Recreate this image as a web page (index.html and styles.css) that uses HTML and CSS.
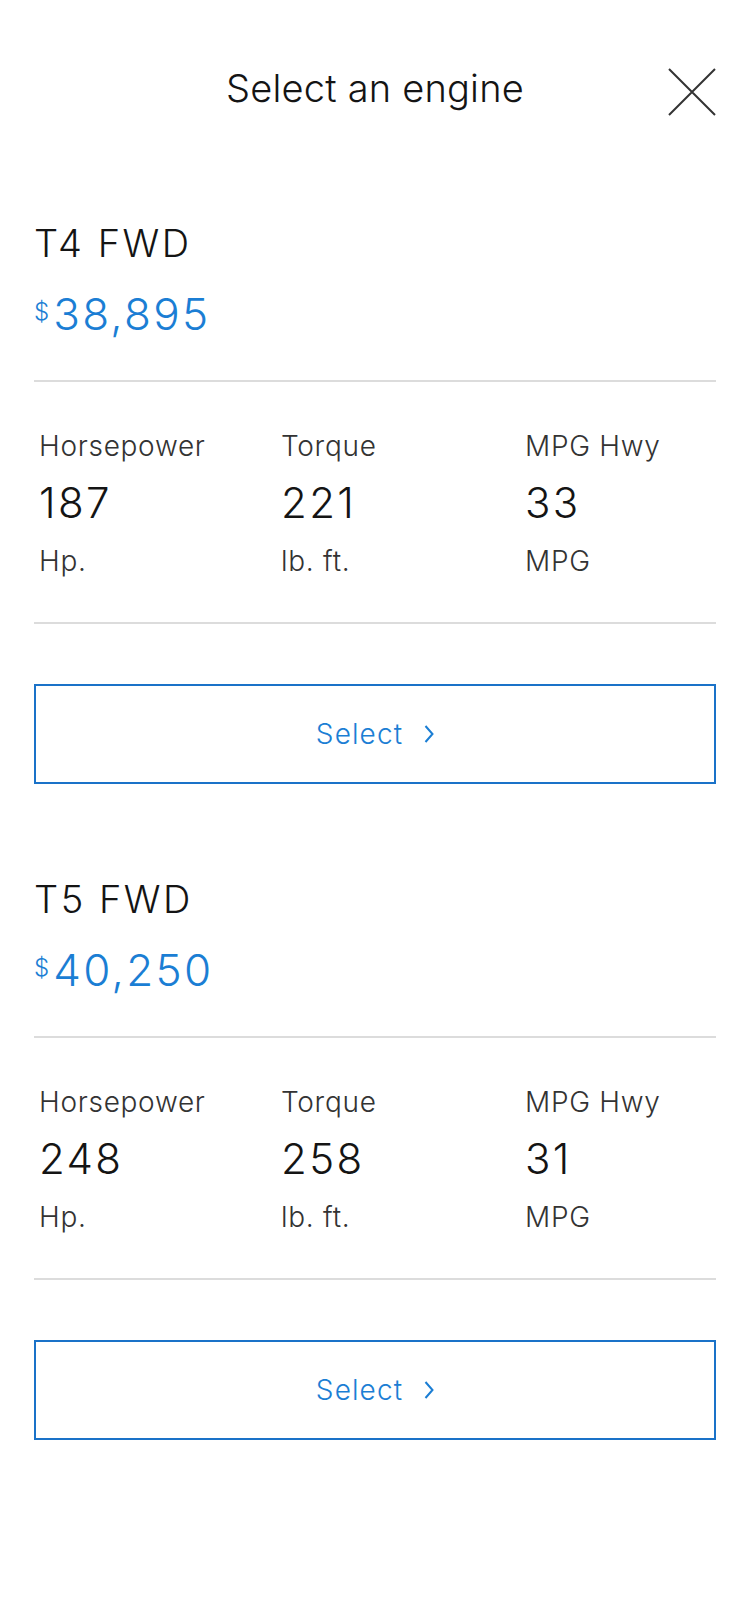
FILE: index.html
```html
<!DOCTYPE html>
<html lang="en">
<head>
<meta charset="utf-8">
<title>Select an engine</title>
<link rel="stylesheet" href="styles.css">
</head>
<body>
<div class="page">
  <header class="header">
    <h1 class="title">Select an engine</h1>
    <button class="close" aria-label="Close">
      <svg width="48" height="48" viewBox="0 0 48 48"><path d="M1 1 L47 47 M47 1 L1 47" stroke="#333" stroke-width="2" fill="none"/></svg>
    </button>
  </header>

  <section class="engine">
    <h2 class="name">T4 FWD</h2>
    <div class="price"><span class="cur">$</span>38,895</div>
    <hr class="divider">
    <div class="stats">
      <div class="stat"><div class="label">Horsepower</div><div class="value">187</div><div class="unit">Hp.</div></div>
      <div class="stat"><div class="label">Torque</div><div class="value">221</div><div class="unit">lb. ft.</div></div>
      <div class="stat"><div class="label">MPG Hwy</div><div class="value">33</div><div class="unit">MPG</div></div>
    </div>
    <hr class="divider">
    <button class="select">Select <span class="chev"><svg width="10" height="18" viewBox="0 0 10 18"><path d="M1.5 1 L8.5 9 L1.5 17" stroke="#1b7ed4" stroke-width="2" fill="none"/></svg></span></button>
  </section>

  <section class="engine">
    <h2 class="name">T5 FWD</h2>
    <div class="price"><span class="cur">$</span>40,250</div>
    <hr class="divider">
    <div class="stats">
      <div class="stat"><div class="label">Horsepower</div><div class="value">248</div><div class="unit">Hp.</div></div>
      <div class="stat"><div class="label">Torque</div><div class="value">258</div><div class="unit">lb. ft.</div></div>
      <div class="stat"><div class="label">MPG Hwy</div><div class="value">31</div><div class="unit">MPG</div></div>
    </div>
    <hr class="divider">
    <button class="select">Select <span class="chev"><svg width="10" height="18" viewBox="0 0 10 18"><path d="M1.5 1 L8.5 9 L1.5 17" stroke="#1b7ed4" stroke-width="2" fill="none"/></svg></span></button>
  </section>
</div>
</body>
</html>
```

FILE: styles.css
```css
* { box-sizing: border-box; }
html, body { margin: 0; padding: 0; background: #fff; }
body {
  font-family: Inter, "Noto Sans", "Liberation Sans", sans-serif;
  font-weight: 300;
  color: #141414;
}
.page { width: 750px; }

.header {
  position: relative;
  height: 176px;
  display: flex;
  align-items: center;
  justify-content: center;
}
.title {
  margin: 0;
  font-size: 38px;
  font-weight: 300;
  letter-spacing: 0.2px;
  line-height: 46px;
}
.close {
  position: absolute;
  right: 34px;
  top: 68px;
  width: 48px;
  height: 48px;
  padding: 0;
  border: 0;
  background: none;
}
.close svg { display: block; }

.engine {
  margin: 44px 34px 0 34px;
}
.engine + .engine { margin-top: 92px; }

.name {
  margin: 0;
  font-size: 38px;
  font-weight: 300;
  line-height: 46px;
  letter-spacing: 2.5px;
}
.price {
  margin-top: 24px;
  font-size: 44px;
  line-height: 48px;
  color: #1b7ed4;
  letter-spacing: 2.3px;
}
.cur {
  position: relative;
  top: -10px;
  font-size: 24px;
  letter-spacing: 0;
  margin-right: 4px;
}
.divider {
  margin: 34px 0 0 0;
  border: 0;
  height: 2px;
  background: #dcdcdc;
}
.stats {
  display: grid;
  grid-template-columns: 242px 244px 1fr;
  padding-left: 5px;
  margin-top: 47px;
}
.stats + .divider { margin-top: 44px; }
.label {
  font-size: 28px;
  line-height: 34px;
  color: #333;
  letter-spacing: 0.7px;
}
.value {
  margin-top: 16px;
  font-size: 42px;
  line-height: 48px;
  letter-spacing: 2.4px;
}
.unit {
  margin-top: 17px;
  font-size: 28px;
  line-height: 34px;
  color: #333;
  letter-spacing: 0.7px;
}
.select {
  display: flex;
  align-items: center;
  justify-content: center;
  gap: 21px;
  width: 100%;
  margin: 60px 0 0 0;
  height: 100px;
  border: 2px solid #1a72c8;
  background: #fff;
  color: #1b7ed4;
  font-family: inherit;
  font-weight: 300;
  font-size: 28px;
  letter-spacing: 1.1px;
  padding: 0;
}
.chev { display: flex; }
.chev svg { display: block; }
```
